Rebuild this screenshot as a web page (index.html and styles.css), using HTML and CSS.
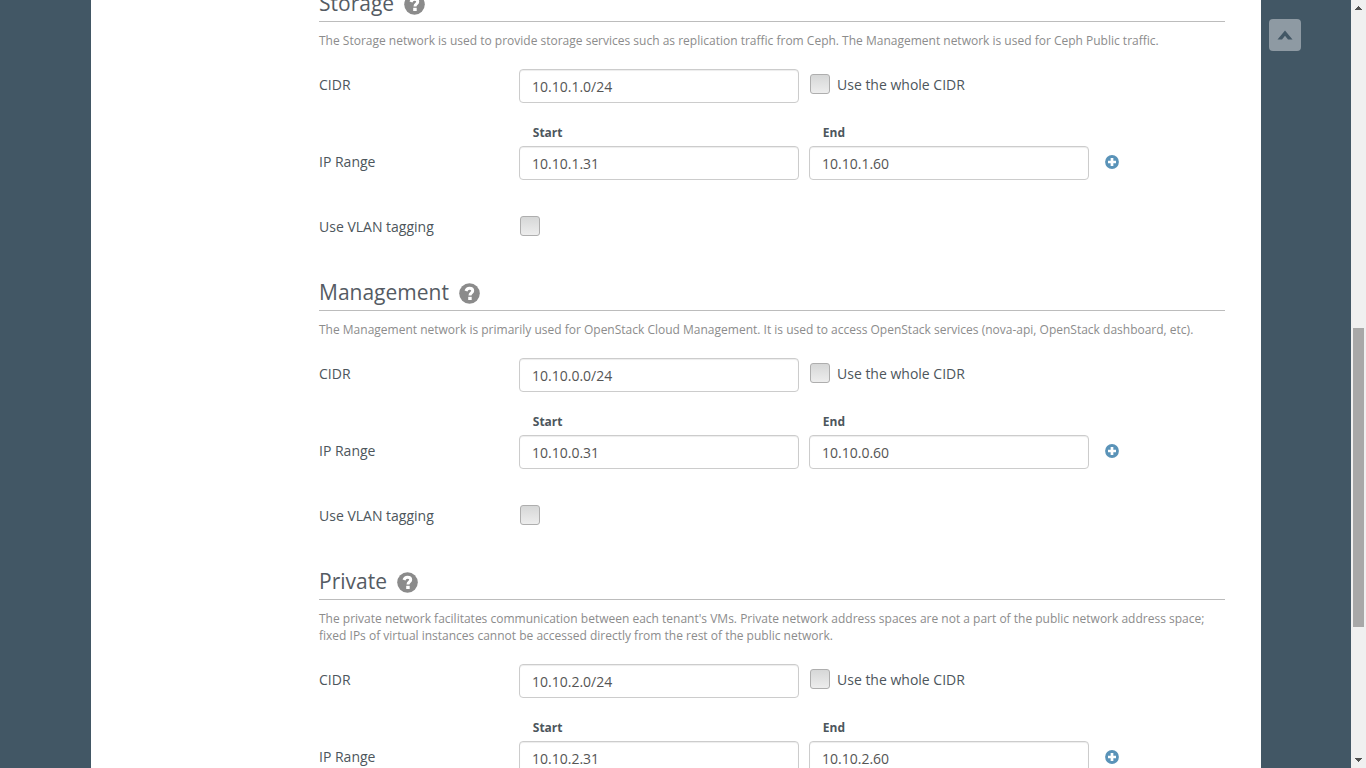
FILE: index.html
```html
<!DOCTYPE html>
<html lang="en">
<head>
<meta charset="utf-8">
<title>Networks</title>
<link rel="stylesheet" href="styles.css">
</head>
<body>
<svg class="defs" width="0" height="0">
  <symbol id="help" viewBox="0 0 21 21"><circle cx="10.500" cy="10.500" r="10.300" fill="#8b8b8b"/><path d="M7 8C7.500 6.200 8.700 5.300 10.500 5.300c2 0 3.200 1 3.200 2.500 0 2.100-2.700 2.200-2.700 4.700" fill="none" stroke="#fff" stroke-width="3"/><rect x="9.200" y="13.800" width="3.500" height="3.200" fill="#fff"/></symbol>
  <symbol id="plus" viewBox="0 0 14 14"><circle cx="7" cy="7" r="6.900" fill="#5a93b8"/><path d="M7 3v8M3 7h8" stroke="#fff" stroke-width="2.700"/></symbol>
</svg>
<div class="app">
  <main class="page">
    <section class="network">
      <h3 class="title">Storage<svg class="help"><use href="#help"/></svg></h3>
      <p class="description">The Storage network is used to provide storage services such as replication traffic from Ceph. The Management network is used for Ceph Public traffic.</p>
      <div class="row"><span class="label">CIDR</span><input class="field" value="10.10.1.0/24"><label class="whole"><span class="check"></span>Use the whole CIDR</label></div>
      <div class="heads"><span>Start</span><span>End</span></div>
      <div class="row"><span class="label">IP Range</span><input class="field" value="10.10.1.31"><input class="field" value="10.10.1.60"><svg class="plus"><use href="#plus"/></svg></div>
      <div class="vlan"><span class="label">Use VLAN tagging</span><span class="check"></span></div>
    </section>
    <section class="network">
      <h3 class="title">Management<svg class="help"><use href="#help"/></svg></h3>
      <p class="description">The Management network is primarily used for OpenStack Cloud Management. It is used to access OpenStack services (nova-api, OpenStack dashboard, etc).</p>
      <div class="row"><span class="label">CIDR</span><input class="field" value="10.10.0.0/24"><label class="whole"><span class="check"></span>Use the whole CIDR</label></div>
      <div class="heads"><span>Start</span><span>End</span></div>
      <div class="row"><span class="label">IP Range</span><input class="field" value="10.10.0.31"><input class="field" value="10.10.0.60"><svg class="plus"><use href="#plus"/></svg></div>
      <div class="vlan"><span class="label">Use VLAN tagging</span><span class="check"></span></div>
    </section>
    <section class="network">
      <h3 class="title">Private<svg class="help"><use href="#help"/></svg></h3>
      <p class="description">The private network facilitates communication between each tenant's VMs. Private network address spaces are not a part of the public network address space; fixed IPs of virtual instances cannot be accessed directly from the rest of the public network.</p>
      <div class="row"><span class="label">CIDR</span><input class="field" value="10.10.2.0/24"><label class="whole"><span class="check"></span>Use the whole CIDR</label></div>
      <div class="heads"><span>Start</span><span>End</span></div>
      <div class="row"><span class="label">IP Range</span><input class="field" value="10.10.2.31"><input class="field" value="10.10.2.60"><svg class="plus"><use href="#plus"/></svg></div>
    </section>
  </main>
  <aside class="side"><button class="to-top" aria-label="Back to top"><svg width="16" height="10" viewBox="0 0 16 10"><path d="M0.500 9.500 8 0.500l7.500 9H11L8 5.800 5 9.500z" fill="#425765"/></svg></button></aside>
  <div class="scrollbar">
    <svg class="arrow" viewBox="0 0 7 4" shape-rendering="crispEdges"><path d="M3 0h1v1h1v1h1v1h1v1H0V3h1V2h1V1h1z"/></svg>
    <div class="thumb"></div>
    <svg class="arrow down" viewBox="0 0 7 4" shape-rendering="crispEdges"><path d="M0 0h7v1H6v1H5v1H4v1H3V3H2V2H1V1H0z"/></svg>
  </div>
</div>
</body>
</html>
```
FILE: styles.css
```css
* { box-sizing: border-box; }
body { margin: 0; height: 768px; overflow: hidden; background: #425765; color: #4d565c; font: 14px/20px "Open Sans", sans-serif; }
.defs { display: none; }
.app { display: grid; grid-template-columns: 1170px 90px 15px; height: 768px; padding-left: 91px; }
.page { height: 768px; overflow: hidden; background: #fff; padding: 0 36px 0 228px; }
.network:first-child { margin-top: -21px; }
.title { display: flex; align-items: flex-start; height: 43px; margin: 0; padding-top: 10px; border-bottom: 1px solid #bcbcbc; color: #555b63; font-size: 21px; line-height: 29px; font-weight: 400; }
.help { width: 21px; height: 21px; margin: 5px 0 0 10px; }
.description { margin: 10px 0 20px; color: #8c8c8c; font-size: 12px; line-height: 17px; }
.row { display: flex; height: 34px; }
.label { width: 200px; padding-top: 6px; }
.field { width: 280px; height: 34px; margin-right: 10px; padding: 0 12px; border: 1px solid #ccc; border-radius: 4px; background: #fff; box-shadow: inset 0 1px 1px rgba(0, 0, 0, .075); color: #555; font: 14px "Open Sans", sans-serif; }
.whole { display: flex; padding: 5px 0 0 1px; line-height: 22px; }
.check { flex: none; width: 20px; height: 20px; margin-right: 7px; border: 1px solid #aeaeae; border-radius: 3px; background: linear-gradient(#d6d7d7, #ededed); }
.heads { display: grid; grid-template-columns: 290px 290px; height: 43px; padding: 20px 0 0 213.800px; font-size: 12px; font-weight: 700; }
.plus { width: 14px; height: 14px; margin: 9px 0 0 6px; }
.vlan { display: flex; height: 88px; padding-top: 36px; }
.vlan .label { width: 201px; padding-top: 1px; }
.side { padding: 19px 0 0 8px; }
.to-top { display: grid; place-items: center; width: 32px; height: 32px; padding: 0; border: 0; border-radius: 4px; background: #8e9aa3; }
.scrollbar { display: flex; flex-direction: column; background: #f0f0f0; }
.arrow { width: 7px; height: 4px; margin: 6px 0 0 4px; fill: #505050; flex: none; }
.thumb { width: 11px; height: 299px; margin: 318px 0 0 2px; background: #a8a8a8; }
.down { margin-top: 131px; }
```
